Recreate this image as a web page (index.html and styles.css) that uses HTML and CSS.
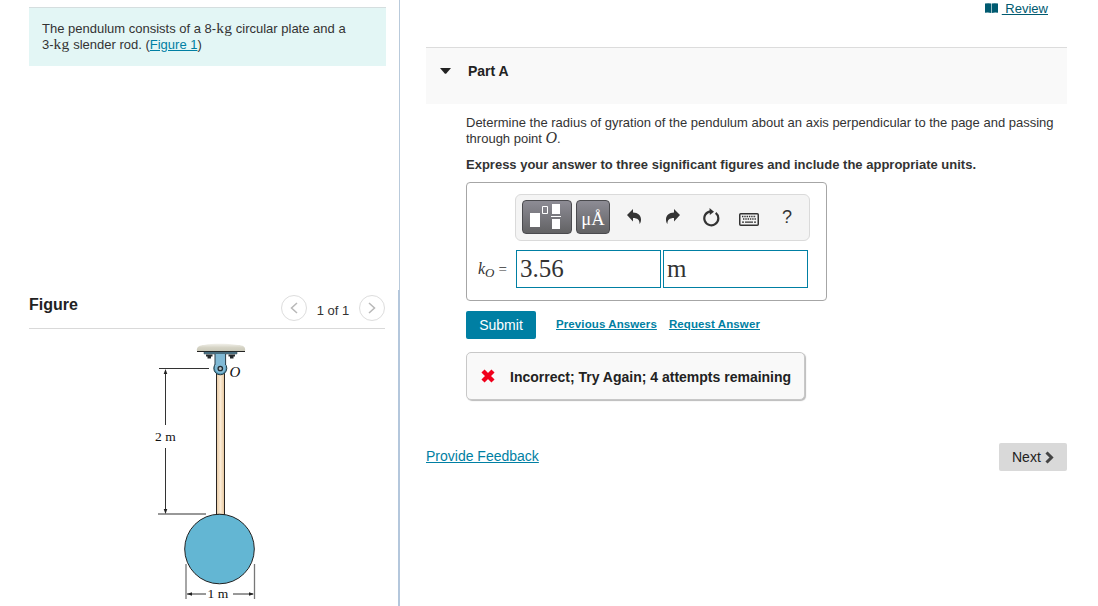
FILE: index.html
```html
<!DOCTYPE html>
<html lang="en">
<head>
<meta charset="utf-8">
<title>Pendulum radius of gyration</title>
<link rel="stylesheet" href="styles.css">
</head>
<body>
<div class="page">
  <aside class="sidebar">
    <section class="problem">
      <div class="statement">
        <div class="line l1">The pendulum consists of a 8-<span class="unit">kg</span> circular plate and a</div>
        <div class="line l2">3-<span class="unit">kg</span> slender rod. (<a href="#">Figure 1</a>)</div>
      </div>
    </section>
    <section class="figure">
      <header class="figure-head">
        <h2>Figure</h2>
        <div class="pager">
          <button class="round" aria-label="Previous"><svg width="8" height="12" viewBox="0 0 8 12"><path d="M7 1 1.500 6 7 11"/></svg></button>
          <span class="count">1 of 1</span>
          <button class="round" aria-label="Next"><svg width="8" height="12" viewBox="0 0 8 12"><path d="m1 1 5.500 5L1 11"/></svg></button>
        </div>
      </header>
      <svg class="drawing" width="110" height="266" viewBox="150 340 110 266">
        <defs>
          <linearGradient id="ground" x1="0" y1="0" x2="0" y2="1"><stop offset="0" stop-color="#f1f0e9"/><stop offset=".5" stop-color="#d6d4c6"/><stop offset="1" stop-color="#cac9b9"/></linearGradient>
          <linearGradient id="rod" x1="0" y1="0" x2="1" y2="0"><stop offset="0" stop-color="#e8c9a2"/><stop offset=".5" stop-color="#fbebd5"/><stop offset="1" stop-color="#e5c49a"/></linearGradient>
        </defs>
        <path d="M197 351c-1-4 3-6 7-6 12-2 24-1 34 0 5 0 8 2 7 6z" fill="url(#ground)"/>
        <path d="M197 351.5h48" stroke="#222" stroke-width="1.2"/>
        <path d="M204 352h33v2h-33z" fill="#547f94" stroke="#263843" stroke-width=".5"/>
        <path d="M206 354.500h6.500v2h-1.500v2h-3.500v-2H206zM228.500 354.500h6.500v2h-1.500v2H230v-2h-1.500z" fill="#252a2d"/>
        <rect x="216.500" y="371" width="8" height="143.500" fill="url(#rod)" stroke="#292420"/>
        <circle cx="220.300" cy="368.300" r="6.500" fill="#4d91ae" stroke="#223b46"/>
        <path d="M215 354v14a5.300 5.300 0 0 0 10.600 0v-14z" fill="#80b9d5"/>
        <path d="M215 354v11M225.600 354v11" stroke="#283b45"/>
        <circle cx="220.300" cy="368.500" r="2.200" fill="#b6bec2" stroke="#202b31" stroke-width="1.300"/>
        <circle cx="219.500" cy="549" r="34.800" fill="#63b6d3" stroke="#222"/>
        <path d="M159 368.500h50M165.500 371v54M165.500 448v64M187 594h19M233 594h20" stroke="#333" fill="none"/>
        <path d="M158 514h48M186 564v35M254.500 564v35" stroke="#777" stroke-width="1.300"/>
        <path d="m165.500 369-1.800 5h3.600zM165.500 514l-1.800-5h3.600zM187 594l5-1.700v3.400zM254 594l-5-1.700v3.400z" fill="#222"/>
        <text x="229.500" y="377" class="dim it">O</text>
        <text x="155" y="441" class="dim">2 m</text>
        <text x="207.500" y="598" class="dim">1 m</text>
      </svg>
    </section>
  </aside>
  <main class="main">
    <div class="topbar">
      <svg width="13" height="10" viewBox="0 0 13 10"><path d="M0 .5Q3.500-.2 6.200.5V10Q3.500 9.300 0 9.800zM6.800.5Q9.500-.2 13 .5v9.300Q9.500 9.300 6.800 10z" fill="#005a70"/></svg>
      <a href="#" class="review">&nbsp;Review</a>
    </div>
    <header class="part-head">
      <svg width="11" height="6" viewBox="0 0 11 6"><path d="M0 0h11L6.300 5.500q-.8.700-1.600 0z" fill="#222"/></svg>
      <h3>Part A</h3>
    </header>
    <div class="question">
      <div class="line q1">Determine the radius of gyration of the pendulum about an axis perpendicular to the page and passing</div>
      <div class="line q2">through point <i class="math">O</i>.</div>
      <div class="line instruct">Express your answer to three significant figures and include the appropriate units.</div>
      <div class="answer">
        <div class="toolbar">
          <button class="tool templates" aria-label="Templates"><svg width="50" height="34" viewBox="0 0 50 34"><path d="M8 13h10v14H8zM30 4h8v10h-8zM30 19h8v10h-8zM29 16h10v1H29z" fill="#fff"/><path d="M20.500 6.500h5v7h-5z" fill="none" stroke="#fff"/></svg></button>
          <button class="tool units">μÅ</button>
          <button class="icon undo" aria-label="Undo"><svg width="15" height="16" viewBox="0 0 15 16"><path d="M6 0v3.500c5 0 8 3 8 7 0 2-.6 3.500-1.500 4.500.4-4-2-6-6.500-6v3.500L0 6z"/></svg></button>
          <button class="icon redo" aria-label="Redo"><svg width="15" height="16" viewBox="0 0 15 16"><path d="M8 0v3.500c-5 0-8 3-8 7C0 12.500.6 14 1.500 15c-.4-4 2-6 6.500-6v3.500L14 6z"/></svg></button>
          <button class="icon reset" aria-label="Reset"><svg width="18" height="19" viewBox="0 0 18 19"><path d="M13.700 4.800A7 7 0 1 1 8.500 3.300" fill="none" stroke="#333" stroke-width="2.200"/><path d="M7.500 0 12 3.700 7.800 7z"/></svg></button>
          <button class="icon keys" aria-label="Keyboard"><svg width="20" height="13" viewBox="0 0 20 13"><rect x=".75" y=".75" width="18.500" height="11.500" rx="1" fill="#f4f4f4" stroke="#333" stroke-width="1.500"/><path d="M3 3.500h14M4 6h13" stroke="#333" stroke-width="1.400" stroke-dasharray="1.400 .9"/><path d="M3 9.200h2M6 9.200h8M15 9.200h2" stroke="#333" stroke-width="1.300"/></svg></button>
          <button class="icon help" aria-label="Help">?</button>
        </div>
        <div class="entry">
          <span class="label"><i>k<sub>O</sub></i><span class="eq">=</span></span>
          <div class="field">3.56</div>
          <div class="field">m</div>
        </div>
      </div>
      <div class="actions">
        <button class="submit">Submit</button>
        <a href="#" class="prev">Previous Answers</a>
        <a href="#" class="req">Request Answer</a>
      </div>
      <div class="feedback">
        <svg width="14" height="14" viewBox="0 0 14 14"><path d="m2 2 10 10M12 2 2 12" stroke="#f0001c" stroke-width="4.400"/></svg>
        <span>Incorrect; Try Again; 4 attempts remaining</span>
      </div>
    </div>
    <footer class="bottom">
      <a href="#" class="provide">Provide Feedback</a>
      <button class="next"><span>Next</span><svg width="9" height="13" viewBox="0 0 9 13"><path d="m1.500 1.500 5 5-5 5" fill="none" stroke="#444" stroke-width="3"/></svg></button>
    </footer>
  </main>
</div>
</body>
</html>
```

FILE: styles.css
```css
* { box-sizing: border-box; }
body { margin: 0; background: #fff; color: #333; font-family: "Liberation Sans", Arial, sans-serif; font-size: 13px; }
a { color: #007fa3; text-underline-offset: 1px; }
button { border: 0; padding: 0; margin: 0; background: none; font-family: inherit; color: inherit; }
svg { display: block; flex: none; }
.page { display: flex; width: 1098px; height: 606px; overflow: hidden; }
.line { white-space: nowrap; line-height: 16px; height: 16px; }

.sidebar { width: 400px; flex: none; }
.problem { height: 290px; padding: 7px 13px 0 29px; border-right: 1px solid #b9cadb; }
.statement { height: 59px; background: #e3f6f5; border-top: 1px solid #d5dedf; padding: 13px; }
.unit { font-family: "Liberation Serif", serif; font-size: 15.5px; letter-spacing: .25px; line-height: 0; }
.figure { height: 316px; border-right: 2px solid #b4c7dc; padding: 0 13px 0 29px; }
.figure-head { height: 39px; border-bottom: 1px solid #d9d9d9; display: flex; justify-content: space-between; padding-top: 5px; }
h2 { margin: 1px 0 0; font-size: 16px; line-height: 18px; color: #222; }
.pager { display: flex; }
.round { width: 26px; height: 26px; border: 1px solid #ddd; border-radius: 50%; display: flex; align-items: center; justify-content: center; }
.round path { fill: none; stroke: #b8b8b8; stroke-width: 1.5; }
.count { width: 52px; text-align: center; line-height: 31px; }
.drawing { margin: 11px 0 0 121px; }
.dim { font-family: "Liberation Serif", serif; font-size: 13.5px; fill: #111; }
.it { font-style: italic; font-size: 15px; }

.main { width: 641px; margin-left: 26px; }
.topbar { height: 47px; display: flex; justify-content: flex-end; padding: 1px 19px 0 0; }
.topbar svg { margin: 2px 4px 0 0; }
.review { color: #005a70; line-height: 15px; height: 15px; }
.part-head { height: 57px; background: #f9f9f9; border-top: 1px solid #dcdcdc; display: flex; padding: 15px 14px; }
.part-head svg { margin-top: 5px; }
h3 { margin: 0 0 0 17px; font-size: 14px; line-height: 16px; color: #222; }
.question { padding: 11px 0 0 40px; }
.math { font-family: "Liberation Serif", serif; font-size: 16px; line-height: 0; }
.instruct { margin-top: 10px; font-weight: bold; }
.answer { width: 361px; height: 119px; margin-top: 9px; border: 1px solid #a6a6a6; border-radius: 4px; padding: 11px 16px 0 11px; }
.toolbar { width: 295px; height: 47px; margin-left: 37px; border: 1px solid #dadada; border-radius: 6px; background: #f4f4f4; display: flex; padding: 5px 0 0 6px; }
.tool { height: 34px; border-radius: 4px; border: 1px solid #4a4a4e; background: linear-gradient(#8d8c95, #626264); }
.templates { width: 50px; margin-right: 4px; }
.templates svg { margin: -1px; }
.units { width: 34px; color: #fff; font: 18.5px/34px "Liberation Serif", serif; padding-top: 1px; }
.icon { height: 34px; display: flex; align-items: center; justify-content: center; fill: #333; }
.undo { margin-left: 17px; }
.redo { margin-left: 24px; }
.reset { margin-left: 21px; }
.keys { margin-left: 19px; padding-top: 4px; }
.help { margin-left: 23px; font-size: 18px; }
.entry { display: flex; margin-top: 9px; }
.label { width: 38px; font: 16px/38px "Liberation Serif", serif; display: flex; }
.label sub { font-size: 13px; line-height: 0; vertical-align: -3px; }
.eq { margin-left: 4px; font-size: 15px; }
.field { width: 145px; height: 38px; border: 1px solid #007fa3; font: 25px/36px "Liberation Serif", serif; padding-left: 3px; margin-right: 2px; }
.actions { display: flex; margin-top: 10px; height: 28px; }
.submit { width: 70px; height: 28px; border-radius: 2px; background: #007fa3; color: #fff; font-size: 14px; }
.prev, .req { font-size: 11.5px; font-weight: bold; line-height: 26px; white-space: nowrap; }
.prev { margin-left: 20px; letter-spacing: .1px; }
.req { margin-left: 12px; letter-spacing: .1px; }
.feedback { width: 339px; height: 48px; margin-top: 13px; background: #f9f9f9; border: 1px solid #c8c8c8; border-radius: 5px; box-shadow: 1px 1px 1px #bbb; display: flex; align-items: center; padding-left: 14px; font-size: 14px; font-weight: bold; color: #222; white-space: nowrap; }
.feedback span { margin-left: 15px; line-height: 16px; padding-top: 1px; }
.bottom { display: flex; justify-content: space-between; margin-top: 43px; }
.provide { font-size: 14px; line-height: 26px; }
.next { width: 68px; height: 28px; border-radius: 2px; background: #d9d9d9; color: #222; font-size: 14px; display: flex; align-items: center; padding-left: 13px; }
.next svg { margin-left: 4px; }
```
